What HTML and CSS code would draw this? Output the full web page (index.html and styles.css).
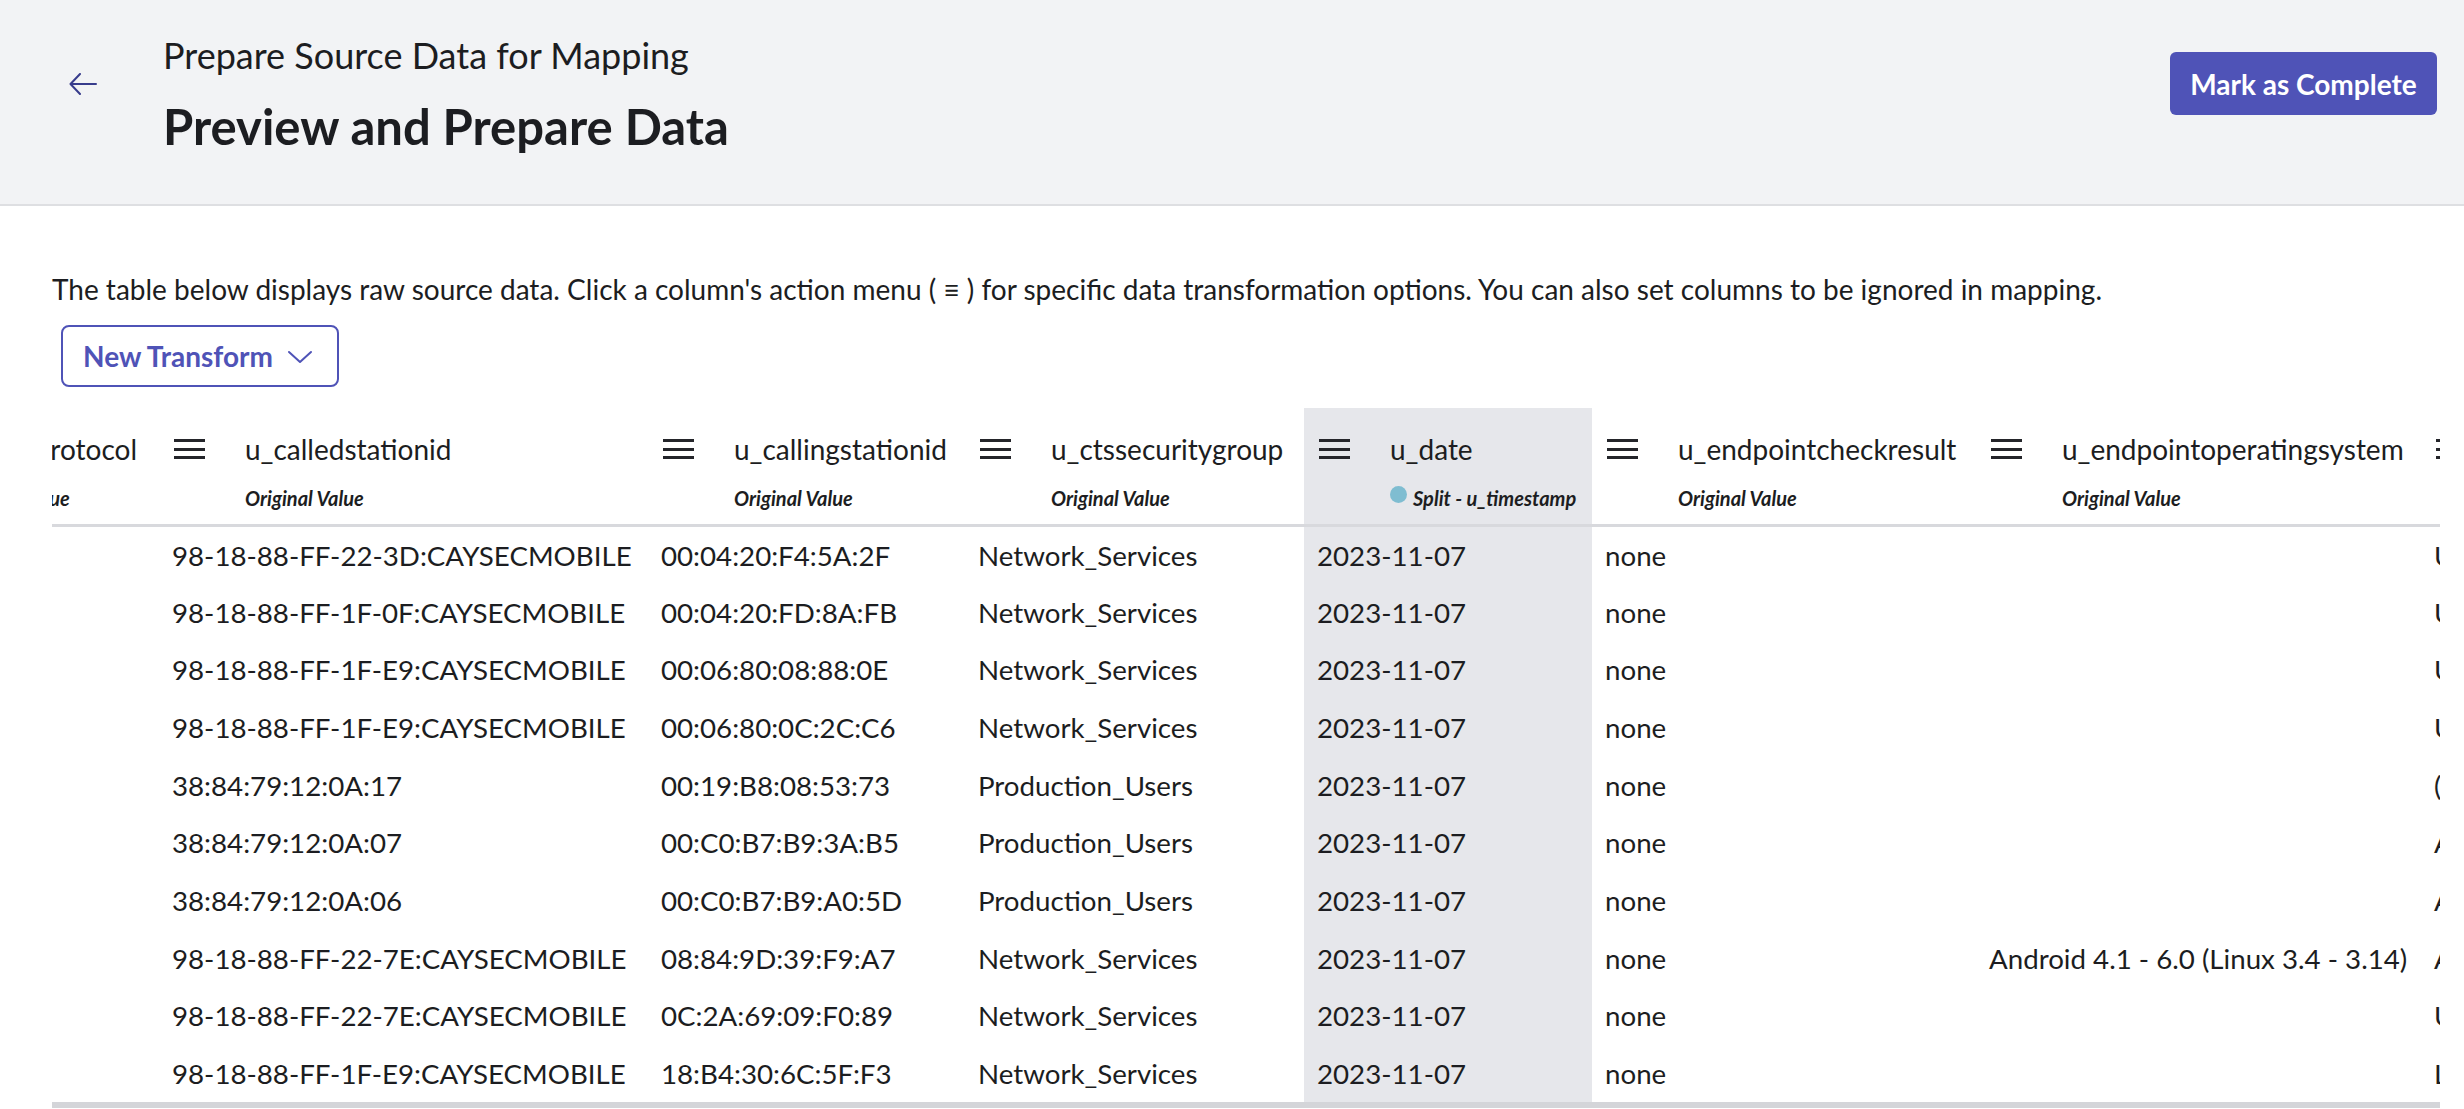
FILE: index.html
```html
<!DOCTYPE html>
<html lang="en">
<head>
<meta charset="utf-8">
<title>Preview and Prepare Data</title>
<link rel="stylesheet" href="styles.css">
</head>
<body>
<header class="topbar">
  <button class="back" aria-label="Back">
    <svg width="28" height="22" viewBox="0 0 28 22" fill="none" stroke="currentColor" stroke-width="2" stroke-linecap="round" stroke-linejoin="round"><path d="M27 11H2"/><path d="M11 1L1.5 11L11 21"/></svg>
  </button>
  <div class="titles">
    <div class="subtitle">Prepare Source Data for Mapping</div>
    <h1 class="title">Preview and Prepare Data</h1>
  </div>
  <button class="primary">Mark as Complete</button>
</header>

<main class="content">
  <p class="desc">The table below displays raw source data. Click a column's action menu ( &#8801; ) for specific data transformation options. You can also set columns to be ignored in mapping.</p>
  <button class="outline">New Transform
    <svg width="26" height="16" viewBox="0 0 26 16" fill="none" stroke="currentColor" stroke-width="2" stroke-linecap="round" stroke-linejoin="round"><path d="M2 3L13 13L24 3"/></svg>
  </button>

  <div class="scroller">
    <table class="grid">
      <colgroup>
        <col class="w0"><col class="w1"><col class="w2"><col class="w3"><col class="w4"><col class="w5"><col class="w6"><col class="w7">
      </colgroup>
      <thead>
        <tr>
          <th><div class="hname"><span class="menu"></span><span>u_authprotocol</span></div><div class="sub">Original Value</div></th>
          <th><div class="hname"><span class="menu"></span><span>u_calledstationid</span></div><div class="sub">Original Value</div></th>
          <th><div class="hname"><span class="menu"></span><span>u_callingstationid</span></div><div class="sub">Original Value</div></th>
          <th><div class="hname"><span class="menu"></span><span>u_ctssecuritygroup</span></div><div class="sub">Original Value</div></th>
          <th class="hl"><div class="hname"><span class="menu"></span><span>u_date</span></div><div class="sub"><span class="dot"></span>Split - u_timestamp</div></th>
          <th><div class="hname"><span class="menu"></span><span>u_endpointcheckresult</span></div><div class="sub">Original Value</div></th>
          <th><div class="hname"><span class="menu"></span><span>u_endpointoperatingsystem</span></div><div class="sub">Original Value</div></th>
          <th><div class="hname"><span class="menu"></span><span>u_endpointosversion</span></div><div class="sub">Original Value</div></th>
        </tr>
      </thead>
      <tbody>
        <tr><td></td><td>98-18-88-FF-22-3D:CAYSECMOBILE</td><td>00:04:20:F4:5A:2F</td><td>Network_Services</td><td class="hl">2023-11-07</td><td>none</td><td></td><td>Unknown</td></tr>
        <tr><td></td><td>98-18-88-FF-1F-0F:CAYSECMOBILE</td><td>00:04:20:FD:8A:FB</td><td>Network_Services</td><td class="hl">2023-11-07</td><td>none</td><td></td><td>Unknown</td></tr>
        <tr><td></td><td>98-18-88-FF-1F-E9:CAYSECMOBILE</td><td>00:06:80:08:88:0E</td><td>Network_Services</td><td class="hl">2023-11-07</td><td>none</td><td></td><td>Unknown</td></tr>
        <tr><td></td><td>98-18-88-FF-1F-E9:CAYSECMOBILE</td><td>00:06:80:0C:2C:C6</td><td>Network_Services</td><td class="hl">2023-11-07</td><td>none</td><td></td><td>Unknown</td></tr>
        <tr><td></td><td>38:84:79:12:0A:17</td><td>00:19:B8:08:53:73</td><td>Production_Users</td><td class="hl">2023-11-07</td><td>none</td><td></td><td>(none)</td></tr>
        <tr><td></td><td>38:84:79:12:0A:07</td><td>00:C0:B7:B9:3A:B5</td><td>Production_Users</td><td class="hl">2023-11-07</td><td>none</td><td></td><td>Android</td></tr>
        <tr><td></td><td>38:84:79:12:0A:06</td><td>00:C0:B7:B9:A0:5D</td><td>Production_Users</td><td class="hl">2023-11-07</td><td>none</td><td></td><td>Android</td></tr>
        <tr><td></td><td>98-18-88-FF-22-7E:CAYSECMOBILE</td><td>08:84:9D:39:F9:A7</td><td>Network_Services</td><td class="hl">2023-11-07</td><td>none</td><td>Android 4.1 - 6.0 (Linux 3.4 - 3.14)</td><td>Android</td></tr>
        <tr><td></td><td>98-18-88-FF-22-7E:CAYSECMOBILE</td><td>0C:2A:69:09:F0:89</td><td>Network_Services</td><td class="hl">2023-11-07</td><td>none</td><td></td><td>Unknown</td></tr>
        <tr><td></td><td>98-18-88-FF-1F-E9:CAYSECMOBILE</td><td>18:B4:30:6C:5F:F3</td><td>Network_Services</td><td class="hl">2023-11-07</td><td>none</td><td></td><td>Linux</td></tr>
      </tbody>
    </table>
  </div>
</main>
</body>
</html>
```

FILE: styles.css
```css
* { box-sizing: border-box; }
html, body { margin: 0; padding: 0; }
body {
  font-family: Lato, "Noto Sans", sans-serif;
  color: #1c1d21;
  background: #ffffff;
  width: 2464px;
  height: 1109px;
  overflow: hidden;
}
button { font-family: inherit; }

.topbar {
  height: 206px;
  background: #f2f3f5;
  border-bottom: 2px solid #dedfe2;
  display: flex;
  align-items: flex-start;
  padding: 0 27px 0 69px;
}
.back {
  background: none;
  border: 0;
  padding: 0;
  margin-top: 73px;
  color: #383c8c;
  width: 28px;
  height: 22px;
  display: flex;
}
.titles {
  margin-left: 66px;
  flex: 1;
  padding-top: 33px;
}
.subtitle {
  font-size: 36px;
  line-height: 44px;
  font-weight: 400;
  color: #1c1d21;
}
.title {
  margin: 20px 0 0;
  font-size: 49px;
  line-height: 58px;
  font-weight: 700;
  color: #1c1d21;
}
.primary {
  margin-top: 52px;
  height: 63px;
  padding: 0 20px;
  width: 267px;
  border: 0;
  border-radius: 6px;
  background: #4f53b7;
  color: #fff;
  font-size: 28px;
  font-weight: 700;
}

.content {
  padding: 66px 24px 0 52px;
}
.desc {
  margin: 0;
  font-size: 28px;
  line-height: 34px;
}
.outline {
  margin: 19px 0 0 9px;
  height: 62px;
  width: 278px;
  border: 2px solid #4f53b7;
  border-radius: 8px;
  background: #fff;
  color: #4f53b7;
  font-size: 28px;
  font-weight: 700;
  display: flex;
  align-items: center;
  gap: 14px;
  padding: 0 0 0 20px;
}
.outline svg { margin-top: 2px; }

.scroller {
  margin-top: 21px;
  width: 2388px;
  overflow: hidden;
  border-bottom: 6px solid #d4d5d9;
}
.grid {
  border-collapse: collapse;
  table-layout: fixed;
  width: 2994px;
  margin-left: -187px;
}
.w0 { width: 294px; }
.w1 { width: 489px; }
.w2 { width: 317px; }
.w3 { width: 339px; }
.w4 { width: 288px; }
.w5 { width: 384px; }
.w6 { width: 445px; }
.w7 { width: 438px; }

th {
  text-align: left;
  vertical-align: top;
  padding: 24px 0 13px 15px;
  border-bottom: 3px solid #d8d9dd;
  font-weight: 400;
  white-space: nowrap;
}
.hname {
  display: flex;
  align-items: center;
  gap: 40px;
  font-size: 28px;
  line-height: 34px;
}
.menu {
  width: 31px;
  height: 20px;
  flex: none;
  border-top: 3px solid #24252a;
  border-bottom: 3px solid #24252a;
  position: relative;
}
.menu::after {
  content: "";
  position: absolute;
  left: 0; right: 0;
  top: 5.5px;
  border-top: 3px solid #24252a;
}
.sub {
  margin: 19px 0 0 71px;
  font-size: 20px;
  line-height: 26px;
  font-style: italic;
  font-weight: 700;
  color: #1c1d21;
  display: flex;
  align-items: center;
}
.dot {
  width: 17px;
  height: 17px;
  border-radius: 50%;
  background: #7fbdd1;
  margin-right: 6px;
  margin-top: -8px;
}

td {
  height: 57.7px;
  padding: 0 0 0 13px;
  font-size: 27.7px;
  white-space: nowrap;
  overflow: hidden;
  vertical-align: middle;
}
.hl { background: #e6e7eb; }
```
